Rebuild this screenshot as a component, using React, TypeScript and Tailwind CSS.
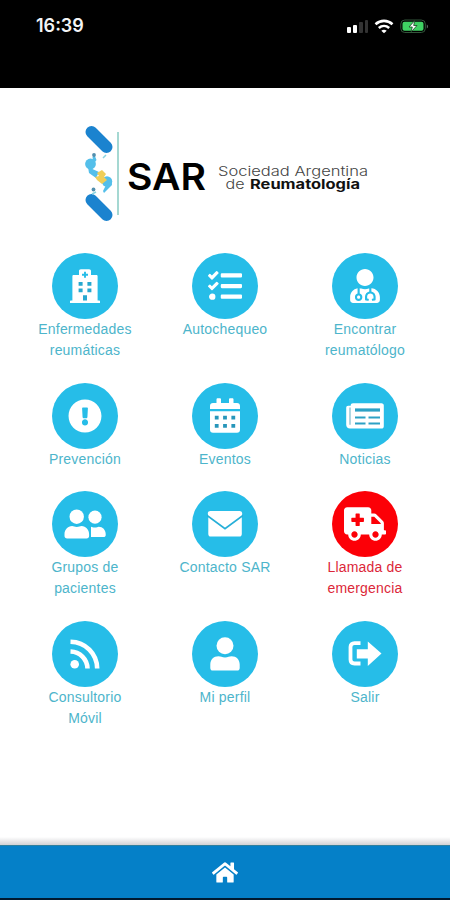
import type { ReactNode } from "react";
import {
  FaAmbulance,
  FaExclamationCircle,
  FaHome,
  FaTasks,
  FaUserMd,
} from "react-icons/fa";

type MenuItem = {
  lines: string[];
  icon: ReactNode;
  emergency?: boolean;
};

function HospitalIcon() {
  return (
    <svg viewBox="0 0 30 34" className="w-[30px] h-[34px]" fill="none">
      <path d="M9 6V2.200C9 1 9.700.3 10.900.3h8.200c1.200 0 1.900.7 1.900 1.900V6h5.300c.8 0 1.300.5 1.300 1.300v24.200H29c.6 0 1 .4 1 1V34H0v-1.500c0-.6.4-1 1-1h1.400V7.300C2.400 6.500 2.900 6 3.700 6z" fill="white" />
      <path d="M15 2.800v6M12 5.800h6" stroke="#26bde8" strokeWidth="1.900" />
      <path d="M8.600 13h4v3.800h-4zM17.400 13h4v3.800h-4zM8.600 19.500h4v3.800h-4zM17.400 19.500h4v3.800h-4zM13 26.300h4v5.200h-4z" fill="#26a8d0" />
    </svg>
  );
}

function CalendarIcon() {
  return (
    <svg viewBox="0 0 32 35" className="w-8 h-[35px]" fill="none">
      <path d="M1 11V8c0-1.900 1.100-3 3-3h3.500V1.500c0-.7.500-1.200 1.200-1.200h2.100c.7 0 1.200.5 1.200 1.200V5h8V1.500c0-.7.5-1.200 1.200-1.200h2.100c.7 0 1.200.5 1.200 1.200V5H28c1.900 0 3 1.100 3 3v3zM1 13.300h30v18.400c0 1.900-1.100 3-3 3H4c-1.900 0-3-1.100-3-3z" fill="white" />
      <path d="M5.800 17.800h3.800v3.700H5.800zM14.100 17.800h3.800v3.700h-3.800zM22.400 17.800h3.800v3.700h-3.800zM5.800 26h3.800v3.700H5.800zM14.100 26h3.800v3.700h-3.800zM22.400 26h3.800v3.700h-3.800z" fill="#2796ba" />
    </svg>
  );
}

function NewspaperIcon() {
  return (
    <svg viewBox="0 0 38 26" className="w-[38px] h-[26px]" fill="none">
      <path d="M7 .3h28.500c1.400 0 2.300.9 2.300 2.300v20.600c0 1.400-.9 2.300-2.300 2.300H4c-2.300 0-3.800-1.500-3.800-3.800V5c0-1.400.8-2.200 2-2.200h2.500v-.4C4.700 1.100 5.600.3 7 .3z" fill="white" />
      <path d="M4 4.500v17.200" stroke="#8dc4d6" strokeWidth="1.400" />
      <path d="M9 7h25" stroke="#2da1c5" strokeWidth="3.200" />
      <path d="M9 14.500h10.500M22.500 14.500H34M9 20.500h10.500M22.500 20.500H34" stroke="#2da1c5" strokeWidth="2.200" />
    </svg>
  );
}

function PeopleIcon() {
  return (
    <svg viewBox="0 0 42 30" className="w-[42px] h-[30px]" fill="currentColor">
      <circle cx="31" cy="8.200" r="6.600" />
      <path d="M27 28h12.500c1.400 0 2.200-.8 2.200-2.100v-1c0-4-3-7.200-7-7.200-1 0-2 .8-4 .8-1.700 0-2.600-.5-3.700-.8z" />
      <g className="stroke-[#26bde8]" strokeWidth="1.800" paintOrder="stroke">
        <circle cx="12.700" cy="7.700" r="7.200" />
        <path d="M3.100 29.500h19.500c1.500 0 2.500-1 2.500-2.500v-1.700c0-4.600-3.200-8.300-7.600-8.300-1.500 0-2.600 1-4.700 1s-3.200-1-4.700-1C3.700 17 .5 20.700.5 25.300V27c0 1.500 1.100 2.500 2.600 2.500z" />
      </g>
    </svg>
  );
}

function EnvelopeIcon() {
  return (
    <svg viewBox="0 0 36 28" className="w-[36px] h-[28px]" fill="none">
      <path d="M3.500 1h29c1.500 0 2.500.9 2.700 2.200L34.800 8v16c0 1.600-1 2.600-2.500 2.600H3.800C2.300 26.600 1.300 25.600 1.300 24V7.500L.8 3.200C.9 1.900 2 1 3.500 1z" fill="white" />
      <path d="M0 5.500l18 13.200L36 5.500" stroke="#26afd8" strokeWidth="1.800" />
    </svg>
  );
}

function RssIcon() {
  return (
    <svg viewBox="0 0 30 30" className="w-[30px] h-[30px]" fill="none">
      <circle cx="4.700" cy="25.300" r="4.300" fill="white" />
      <path d="M.5 12.500c9.500.3 16.700 7.500 17 17M.5 2.800c15 .3 26.400 11.700 26.700 26.700" stroke="white" strokeWidth="4.600" />
    </svg>
  );
}

function PersonIcon() {
  return (
    <svg viewBox="0 0 30 34" className="w-[30px] h-[34px]" fill="currentColor">
      <circle cx="15" cy="8.800" r="8.500" />
      <path d="M8.500 19.200c2.200 0 3.500 1.200 6.500 1.200s4.300-1.200 6.500-1.200c5 0 8.200 3.400 8.200 8.300v3.400c0 1.700-1 2.600-2.700 2.600H3c-1.700 0-2.700-.9-2.700-2.600v-3.400c0-4.900 3.200-8.300 8.200-8.300z" />
    </svg>
  );
}

function ExitIcon() {
  return (
    <svg viewBox="0 0 34 28" className="w-[34px] h-[28px]" fill="none">
      <path d="M12.500 3.200H6.500c-2.500 0-4 1.400-4 3.900v12.400c0 2.500 1.500 4 4 4h6" stroke="white" strokeWidth="3.800" />
      <path d="M8.800 9.200h11V1.500L33.500 13.500 19.800 26v-7.500h-11z" fill="white" />
    </svg>
  );
}

const items: MenuItem[] = [
  { lines: ["Enfermedades", "reumáticas"], icon: <HospitalIcon /> },
  { lines: ["Autochequeo"], icon: <FaTasks className="w-[34px] h-[34px]" /> },
  { lines: ["Encontrar", "reumatólogo"], icon: <FaUserMd className="w-[30px] h-[34px]" /> },
  { lines: ["Prevención"], icon: <FaExclamationCircle className="w-[34px] h-[34px]" /> },
  { lines: ["Eventos"], icon: <CalendarIcon /> },
  { lines: ["Noticias"], icon: <NewspaperIcon /> },
  { lines: ["Grupos de", "pacientes"], icon: <PeopleIcon /> },
  { lines: ["Contacto SAR"], icon: <EnvelopeIcon /> },
  { lines: ["Llamada de", "emergencia"], icon: <FaAmbulance className="w-[42px] h-[34px]" />, emergency: true },
  { lines: ["Consultorio", "Móvil"], icon: <RssIcon /> },
  { lines: ["Mi perfil"], icon: <PersonIcon /> },
  { lines: ["Salir"], icon: <ExitIcon /> },
];

function StatusBar() {
  return (
    <header className="h-[88px] shrink-0 bg-black pr-[21px] pl-9 pt-[14px] flex items-start justify-between text-white">
      <span className="font-['Inter'] text-[18px] leading-6 font-semibold text-gray-100">16:39</span>
      <div className="flex items-center gap-[6px] h-6">
        <div className="flex items-end gap-[2px] h-[14px]">
          <div className="w-1 h-[6px] rounded-[1px] bg-white" />
          <div className="w-1 h-[8px] rounded-[1px] bg-white" />
          <div className="w-1 h-[11px] rounded-[1px] bg-[#333]" />
          <div className="w-[3px] h-[13px] rounded-[1px] bg-[#333]" />
        </div>
        <svg viewBox="0 0 20 15" className="w-5 h-[15px]" fill="none" stroke="white" strokeWidth="2.600">
          <path d="M1.500 5.200C6.500.7 13.500.7 18.500 5.200M4.800 8.900c3.100-2.600 7.300-2.600 10.400 0" />
          <path d="M10 14.300l-2.700-2.600c1.600-1.300 3.800-1.300 5.400 0z" fill="white" stroke="none" />
        </svg>
        <svg viewBox="0 0 29 15" className="w-[29px] h-[15px]" fill="none">
          <rect x="0.800" y="1" width="24.500" height="12.500" rx="4" stroke="#33553b" />
          <rect x="2.500" y="2.800" width="21" height="9" rx="2" fill="#3fd263" />
          <path d="M26.800 5.500v4c1.500-.8 1.500-3.200 0-4z" fill="#63766a" />
          <path d="M14.800 1.500L9 8h3.300L11 13l6-6.500h-3.300z" fill="white" stroke="#17411f" strokeWidth=".8" />
        </svg>
      </div>
    </header>
  );
}

function Logo() {
  return (
    <svg viewBox="0 0 290 104" className="w-[290px] h-[104px]">
      <g stroke="#1b83cf" strokeWidth="12" strokeLinecap="round">
        <path d="M11.500 11L26.500 26M11.500 79L26.500 94" />
      </g>
      <g fill="#54bfea">
        <circle cx="10.500" cy="43" r="5.400" />
        <path d="M12.500 36l2-2 2 5-3 4zM8 46l11 5-3 6-7-5z" />
        <circle cx="27" cy="60.500" r="5.200" />
        <path d="M31 57l1 7-8 8-1-2 3-6z" />
      </g>
      <path d="M17 52l5-3 4 4-2 3 3 3-5 4-5-4-2-3 4-1z" fill="#efce58" />
      <circle cx="14" cy="34" r="1.900" fill="#528fae" />
      <circle cx="13.500" cy="68.500" r="1.900" fill="#528fae" />
      <path d="M23 37l3-3M16 71l-4 2" stroke="#8ad4df" strokeWidth="1.500" />
      <rect x="37" y="11" width="2" height="83" fill="#a5d8d2" />
      <text x="47" y="69" textLength="79" lengthAdjust="spacingAndGlyphs" className="font-['Inter'] text-[37px] font-semibold fill-black">SAR</text>
      <text x="138" y="55" textLength="150" lengthAdjust="spacingAndGlyphs" className="font-['Inter'] text-[13px] font-light fill-[#444]">Sociedad Argentina</text>
      <text x="145.500" y="68" textLength="19" lengthAdjust="spacingAndGlyphs" className="font-['Inter'] text-[13px] font-light fill-[#444]">de</text>
      <text x="170" y="68" textLength="110" lengthAdjust="spacingAndGlyphs" className="font-['Inter'] text-[13px] font-bold fill-[#111]">Reumatología</text>
    </svg>
  );
}

export default function App() {
  return (
    <div className="w-[450px] h-[900px] flex flex-col overflow-hidden bg-white font-['Liberation_Sans',sans-serif]">
      <StatusBar />

      <main className="flex-1 flex flex-col pt-[33px]">
        <div className="pl-20">
          <Logo />
        </div>

        <nav className="mt-7 px-[15px] grid grid-cols-3 gap-y-[21.5px]">
          {items.map((item) => (
            <button
              key={item.lines[0]}
              className={`flex flex-col items-center ${item.emergency ? "text-[#dc2739]" : "text-[#4db5cb]"}`}
            >
              <span
                className={`size-[66px] rounded-full flex items-center justify-center text-white ${
                  item.emergency ? "bg-[#fc0007]" : "bg-[#26bde8]"
                }`}
              >
                {item.icon}
              </span>
              {item.lines.map((line) => (
                <span key={line} className="text-[14px] leading-[21px] tracking-[0.2px]">
                  {line}
                </span>
              ))}
            </button>
          ))}
        </nav>
      </main>

      <div className="h-2 shrink-0 bg-linear-to-b from-white to-[#d3d2d5]" />
      <footer className="h-[53px] shrink-0 bg-[#0580c8] border-t border-[#30809e] flex items-center justify-center">
        <FaHome className="w-[26px] h-[25px] text-white" />
      </footer>
      <div className="h-[2px] shrink-0 bg-[#001a30]" />
    </div>
  );
}
